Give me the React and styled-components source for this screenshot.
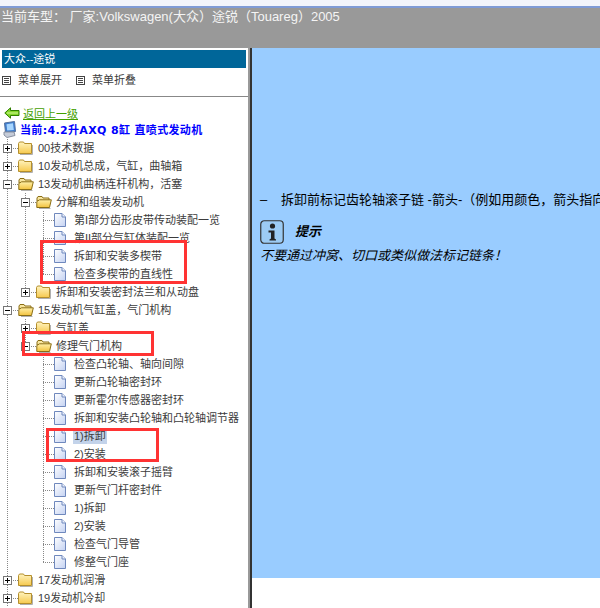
import React from "react";
import styled, { createGlobalStyle } from "styled-components";

const tree = [
  { label: "00技术数据", kind: "closed", guides: [] },
  { label: "10发动机总成，气缸，曲轴箱", kind: "closed", guides: [] },
  { label: "13发动机曲柄连杆机构，活塞", kind: "open", guides: [] },
  { label: "分解和组装发动机", kind: "open", guides: [1] },
  { label: "第I部分齿形皮带传动装配一览", kind: "page", guides: [1, 1] },
  { label: "第II部分气缸体装配一览", kind: "page", guides: [1, 1] },
  { label: "拆卸和安装多楔带", kind: "page", guides: [1, 1] },
  { label: "检查多楔带的直线性", kind: "page", guides: [1, 1], end: true },
  { label: "拆卸和安装密封法兰和从动盘", kind: "closed", guides: [1], end: true },
  { label: "15发动机气缸盖，气门机构", kind: "open", guides: [] },
  { label: "气缸盖", kind: "closed", guides: [1] },
  { label: "修理气门机构", kind: "open", guides: [1], end: true },
  { label: "检查凸轮轴、轴向间隙", kind: "page", guides: [1, 0] },
  { label: "更新凸轮轴密封环", kind: "page", guides: [1, 0] },
  { label: "更新霍尔传感器密封环", kind: "page", guides: [1, 0] },
  { label: "拆卸和安装凸轮轴和凸轮轴调节器", kind: "page", guides: [1, 0] },
  { label: "1)拆卸", kind: "page", guides: [1, 0], selected: true },
  { label: "2)安装", kind: "page", guides: [1, 0] },
  { label: "拆卸和安装滚子摇臂", kind: "page", guides: [1, 0] },
  { label: "更新气门杆密封件", kind: "page", guides: [1, 0] },
  { label: "1)拆卸", kind: "page", guides: [1, 0] },
  { label: "2)安装", kind: "page", guides: [1, 0] },
  { label: "检查气门导管", kind: "page", guides: [1, 0] },
  { label: "修整气门座", kind: "page", guides: [1, 0], end: true },
  { label: "17发动机润滑", kind: "closed", guides: [] },
  { label: "19发动机冷却", kind: "closed", guides: [] },
];

const ClosedFolder = () => (
  <svg width="15" height="14" viewBox="0 0 15 14">
    <defs>
      <linearGradient id="closedFill" x1="0" y1="0" x2="0" y2="1">
        <stop offset="0" stopColor="#fff4c0" />
        <stop offset="1" stopColor="#f6c94e" />
      </linearGradient>
    </defs>
    <path d="M14.5 4 V13.5 H2" fill="none" stroke="#b0b0b0" />
    <path d="M0.5 2.5 L1.5 1 H5.5 L6.5 2.5 H13.5 V12.5 H0.5 Z" fill="url(#closedFill)" stroke="#b58f2c" />
  </svg>
);

const OpenFolder = () => (
  <svg width="16" height="14" viewBox="0 0 16 14">
    <defs>
      <linearGradient id="openFill" x1="0" y1="0" x2="0" y2="1">
        <stop offset="0" stopColor="#fff0a8" />
        <stop offset="1" stopColor="#f2c23e" />
      </linearGradient>
    </defs>
    <path d="M1 3 L2 1.5 H6 L7 3 H13 V6 H1 Z" fill="#f8e6a0" stroke="#8a6d14" />
    <path d="M0.8 12.5 V6.5 L3.5 4.8 H15.3 L13.5 12.5 Z" fill="url(#openFill)" stroke="#8a6d14" />
    <path d="M3 13.5 H14.5" stroke="#b0b0b0" />
  </svg>
);

const PageIcon = () => (
  <svg width="12" height="14" viewBox="0 0 12 14">
    <defs>
      <linearGradient id="pageFill" x1="0" y1="0" x2="1" y2="1">
        <stop offset="0" stopColor="#ffffff" />
        <stop offset="1" stopColor="#c4d2f2" />
      </linearGradient>
    </defs>
    <path d="M0.5 0.5 H8 L11.5 4 V13.5 H0.5 Z" fill="url(#pageFill)" stroke="#6f88bd" />
    <path d="M8 0.5 V4 H11.5" fill="#eef2fc" stroke="#6f88bd" />
  </svg>
);

const MenuIcon = () => (
  <svg width="9" height="9" viewBox="0 0 9 9">
    <rect x="0.5" y="0.5" width="8" height="8" fill="#fff" stroke="#444" />
    <path d="M2 2.5 H7 M2 4.5 H7 M2 6.5 H7" stroke="#444" />
  </svg>
);

const BackArrow = () => (
  <svg width="16" height="12" viewBox="0 0 16 12">
    <path d="M0.8 6 L6.5 0.8 V3.5 H15 V8.5 H6.5 V11.2 Z" fill="#84d82a" stroke="#2f7d00" />
    <path d="M3 6 H14" stroke="#d4f59a" />
  </svg>
);

const ComputerIcon = () => (
  <svg width="13" height="17" viewBox="0 0 13 17">
    <path d="M1.5 2 L11.5 0.5 L12.5 10.5 L2.5 11.5 Z" fill="#3f7fd0" stroke="#54719f" />
    <path d="M3.5 3.2 L10 2.3 L10.8 8.9 L4.2 9.6 Z" fill="#a8d6ff" />
    <path d="M1 11 L11 11 L12 14.5 L4 16.5 L1 14 Z" fill="#c6ccd8" stroke="#8890a0" />
  </svg>
);

const InfoIcon = () => (
  <svg width="24" height="24" viewBox="0 0 24 24">
    <rect x="0.75" y="0.75" width="22.5" height="22.5" rx="3.5" fill="#9ccbf4" stroke="#333" strokeWidth="1.2" />
    <circle cx="12.5" cy="6" r="2.6" fill="#222" />
    <path d="M8.5 10.5 H14.5 V18.5 L16 19.5 V20.5 H9.5 V19.5 L11 18.5 V12.5 H8.5 Z" fill="#222" />
  </svg>
);

const ToggleIcon = ({ open }) => (
  <svg width="9" height="9" viewBox="0 0 9 9">
    <rect x="0.5" y="0.5" width="8" height="8" fill="#fff" stroke="#777" />
    <path d={open ? "M2 4.5 H7" : "M2 4.5 H7 M4.5 2 V7"} stroke="#000" />
  </svg>
);

const TreeRow = ({ item }) => (
  <Row>
    {item.guides.map((on, i) => (
      <Guide key={i} $on={on} />
    ))}
    <Joint $end={item.end}>
      {item.kind !== "page" && <ToggleIcon open={item.kind === "open"} />}
    </Joint>
    <IconCell>
      {item.kind === "closed" && <ClosedFolder />}
      {item.kind === "open" && <OpenFolder />}
      {item.kind === "page" && <PageIcon />}
    </IconCell>
    <Label $selected={item.selected}>{item.label}</Label>
  </Row>
);

export default function App() {
  return (
    <Page>
      <GlobalStyle />
      <TopStrip />
      <CarBar>当前车型： 厂家:Volkswagen(大众）途锐（Touareg）2005</CarBar>
      <Body>
        <Sidebar>
          <TitleBar>大众--途锐</TitleBar>
          <MenuBar>
            <MenuItem>
              <MenuIcon />
              菜单展开
            </MenuItem>
            <MenuItem>
              <MenuIcon />
              菜单折叠
            </MenuItem>
          </MenuBar>
          <TreeArea>
            <BackRow>
              <BackArrow />
              <BackLink>返回上一级</BackLink>
            </BackRow>
            <CurrentRow>
              <ComputerIcon />
              当前:4.2升AXQ 8缸 直喷式发动机
            </CurrentRow>
            <Tree>
              {tree.map((item, i) => (
                <TreeRow key={i} item={item} />
              ))}
            </Tree>
          </TreeArea>
          <Mark $x={40} $y={192} $w={147} $h={44} />
          <Mark $x={22} $y={283} $w={132} $h={25} />
          <Mark $x={46} $y={380} $w={113} $h={34} />
        </Sidebar>
        <Splitter />
        <Content>
          <Article>
            <Step>
              <Dash>–</Dash>
              拆卸前标记齿轮轴滚子链 -箭头-（例如用颜色，箭头指向运转方向）。
            </Step>
            <TipHead>
              <InfoIcon />
              <TipTitle>提示</TipTitle>
            </TipHead>
            <TipText>不要通过冲窝、切口或类似做法标记链条！</TipText>
          </Article>
        </Content>
      </Body>
    </Page>
  );
}

const GlobalStyle = createGlobalStyle`
  html, body {
    margin: 0;
    padding: 0;
    background: #fff;
    overflow: hidden;
  }
  * {
    box-sizing: border-box;
  }
`;

const Page = styled.div`
  width: 600px;
  height: 608px;
  display: flex;
  flex-direction: column;
  overflow: hidden;
  font-family: "Liberation Sans", "Noto Sans CJK SC", sans-serif;
  font-size: 11px;
  color: #3c3c3c;
`;

const TopStrip = styled.div`
  height: 8px;
  flex: none;
  background: #f2f4fb;
  border-bottom: 2px solid #7f9bd6;
`;

const CarBar = styled.div`
  height: 40px;
  flex: none;
  padding-left: 1px;
  background: #999999;
  color: #f4f4f4;
  font-size: 13px;
  line-height: 17px;
  white-space: nowrap;
`;

const Body = styled.div`
  flex: 1;
  display: flex;
  min-height: 0;
`;

const Sidebar = styled.div`
  width: 248px;
  flex: none;
  position: relative;
  padding-top: 2px;
  overflow: hidden;
`;

const TitleBar = styled.div`
  height: 18px;
  margin: 0 2px;
  padding-left: 2px;
  background: #006699;
  color: #fff;
  font-size: 11px;
  line-height: 18px;
`;

const MenuBar = styled.div`
  height: 29px;
  padding: 4px 0 0 2px;
  display: flex;
  align-items: flex-start;
  gap: 14px;
  border-bottom: 1px solid #888;
`;

const MenuItem = styled.span`
  display: flex;
  align-items: center;
  gap: 7px;
  width: 60px;
  line-height: 16px;
`;

const TreeArea = styled.div`
  padding-top: 8px;
`;

const BackRow = styled.div`
  height: 16px;
  padding-left: 4px;
  display: flex;
  align-items: center;
  gap: 3px;
`;

const BackLink = styled.span`
  color: #44a000;
  text-decoration: underline;
`;

const CurrentRow = styled.div`
  height: 16px;
  padding-left: 3px;
  display: flex;
  align-items: center;
  gap: 4px;
  color: #0000ff;
  font-family: "DejaVu Sans", "Noto Sans CJK SC", sans-serif;
  font-weight: 700;
  font-size: 11px;
  letter-spacing: 0.35px;
  white-space: nowrap;
`;

const Tree = styled.div`
  margin-top: 2px;
`;

const Row = styled.div`
  height: 18px;
  display: flex;
  align-items: center;
  white-space: nowrap;
`;

const Guide = styled.span`
  width: 18px;
  height: 18px;
  flex: none;
  background: ${(p) =>
    p.$on
      ? "repeating-linear-gradient(#888 0 1px, transparent 1px 2px) 7px 0 / 1px 100% no-repeat"
      : "none"};
`;

const Joint = styled.span`
  width: 18px;
  height: 18px;
  flex: none;
  display: flex;
  align-items: center;
  padding-left: 3px;
  background:
    repeating-linear-gradient(#888 0 1px, transparent 1px 2px) 7px 0 / 1px ${(p) => (p.$end ? "9px" : "100%")} no-repeat,
    repeating-linear-gradient(90deg, #888 0 1px, transparent 1px 2px) 7px 9px / 11px 1px no-repeat;
`;

const IconCell = styled.span`
  width: 20px;
  flex: none;
  display: flex;
  align-items: center;
`;

const Label = styled.span`
  padding: 0 ${(p) => (p.$selected ? "1px" : "0")};
  margin-left: ${(p) => (p.$selected ? "-1px" : "0")};
  background: ${(p) => (p.$selected ? "#c3d3ea" : "transparent")};
  line-height: 15px;
`;

const Mark = styled.div`
  position: absolute;
  left: ${(p) => p.$x}px;
  top: ${(p) => p.$y}px;
  width: ${(p) => p.$w}px;
  height: ${(p) => p.$h}px;
  border: 3px solid #ff3333;
`;

const Splitter = styled.div`
  width: 4px;
  flex: none;
  background: linear-gradient(90deg, #999 0 2px, #333 2px 4px);
`;

const Content = styled.div`
  flex: 1;
  min-width: 0;
  overflow: hidden;
`;

const Article = styled.div`
  height: 530px;
  padding: 144px 0 0 8px;
  background: #99ccff;
  color: #000;
  font-size: 13px;
  line-height: 16px;
`;

const Step = styled.div`
  white-space: nowrap;
`;

const Dash = styled.span`
  display: inline-block;
  width: 21px;
`;

const TipHead = styled.div`
  margin-top: 12px;
  display: flex;
  align-items: center;
  gap: 11px;
`;

const TipTitle = styled.span`
  font-weight: 700;
  font-style: italic;
  color: #000;
`;

const TipText = styled.div`
  margin-top: 4px;
  font-style: italic;
  white-space: nowrap;
`;
